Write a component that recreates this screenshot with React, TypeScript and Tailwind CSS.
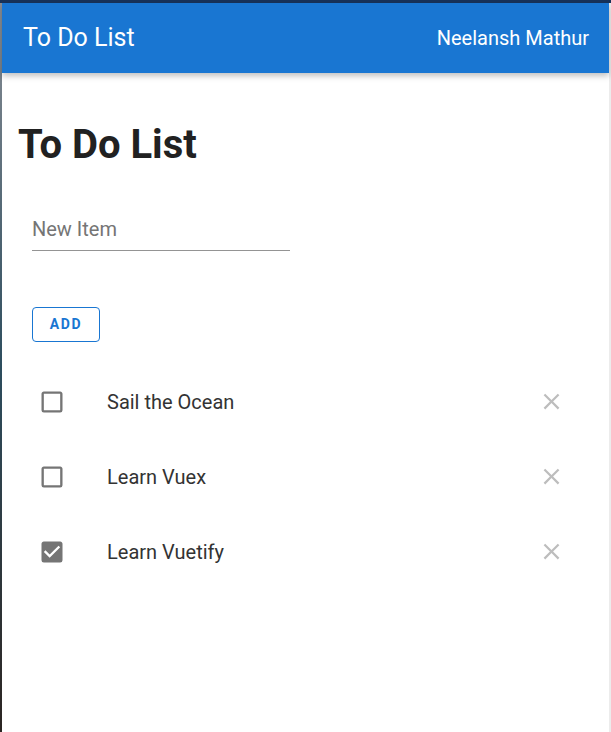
const todos = [
  { title: "Sail the Ocean", done: false },
  { title: "Learn Vuex", done: false },
  { title: "Learn Vuetify", done: true },
];

function CheckboxIcon({ checked }: { checked: boolean }) {
  return (
    <svg viewBox="0 0 24 24" className="w-[28px] h-[28px] fill-[#757575]">
      {checked ? (
        <path d="M10,17L5,12L6.41,10.58L10,14.17L17.59,6.58L19,8M19,3H5C3.89,3 3,3.89 3,5V19A2,2 0 0,0 5,21H19A2,2 0 0,0 21,19V5C21,3.89 20.1,3 19,3Z" />
      ) : (
        <path d="M19,3H5C3.89,3 3,3.89 3,5V19A2,2 0 0,0 5,21H19A2,2 0 0,0 21,19V5C21,3.89 20.1,3 19,3M19,5V19H5V5H19Z" />
      )}
    </svg>
  );
}

function CloseIcon() {
  return (
    <svg viewBox="0 0 24 24" className="w-[27px] h-[27px] fill-[#bdbdbd]">
      <path d="M19,6.41L17.59,5L12,10.59L6.41,5L5,6.41L10.59,12L5,17.59L6.41,19L12,13.41L17.59,19L19,17.59L13.41,12L19,6.41Z" />
    </svg>
  );
}

export default function App() {
  return (
    <div className="h-[732px] flex flex-col bg-white overflow-hidden font-['Roboto',sans-serif]">
      <div className="h-[3px] bg-[#17325a]" />
      <div className="flex flex-1">
        <div className="w-[2px] bg-gradient-to-b from-[#8a8f96] via-[#2d4d5e] to-[#2b2522]" />
        <div className="flex-1 flex flex-col">
          {/* Toolbar */}
          <header className="h-[70px] bg-[#1976d2] flex items-center justify-between pl-[21px] pr-[20px] text-white shadow-[0_3px_6px_rgba(0,0,0,0.25)] relative z-10">
            <span className="text-[25px]">To Do List</span>
            <span className="text-[20px]">Neelansh Mathur</span>
          </header>

          <main className="flex-1 px-[16px]">
            <h1 className="mt-[48px] text-[40px] leading-[48px] font-bold text-[#212121]">To Do List</h1>

            {/* New item input */}
            <div className="mt-[47px] ml-[14px] w-[258px] border-b border-[#949494] pb-[7px]">
              <input
                placeholder="New Item"
                className="w-full outline-none text-[20px] leading-[26px] placeholder:text-[#757575]"
              />
            </div>

            <button className="mt-[56px] ml-[14px] h-[35px] w-[68px] border border-[#1976d2] rounded-[4px] text-[#1976d2] text-[14px] font-bold tracking-[0.12em]">
              ADD
            </button>

            {/* Items */}
            <ul className="mt-[22px]">
              {todos.map((t) => (
                <li key={t.title} className="h-[75px] flex items-center">
                  <div className="w-[70px] pl-[20px]">
                    <CheckboxIcon checked={t.done} />
                  </div>
                  <span className="flex-1 pl-[19px] text-[20px] text-[#333333]">{t.title}</span>
                  <div className="pr-[28px]">
                    <CloseIcon />
                  </div>
                </li>
              ))}
            </ul>
          </main>
        </div>
        <div className="w-[2px] bg-[#ececec]" />
      </div>
    </div>
  );
}
